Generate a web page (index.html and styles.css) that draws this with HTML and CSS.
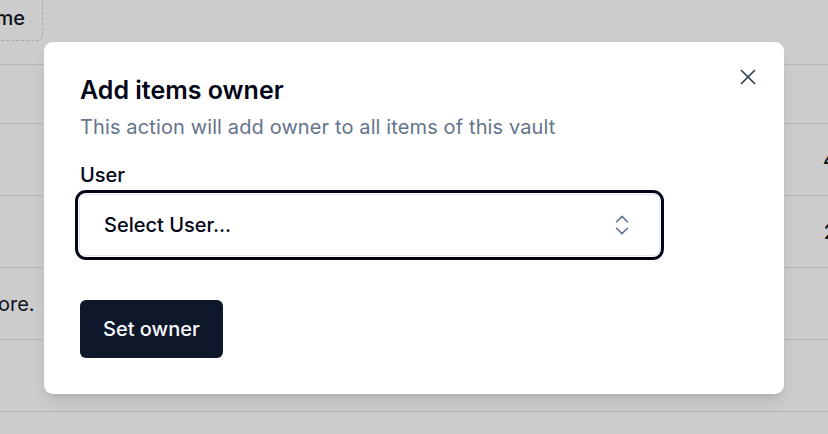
FILE: index.html
```html
<!DOCTYPE html>
<html>
<head>
<meta charset="utf-8">
<link rel="stylesheet" href="styles.css">
</head>
<body>
<div class="page">
  <div class="head-row">
    <div class="head-cell">me</div>
  </div>
  <div class="table">
    <div class="row row-first"><span class="lt"></span><span class="rt"></span></div>
    <div class="row"><span class="lt"></span><span class="rt">4</span></div>
    <div class="row"><span class="lt"></span><span class="rt">2</span></div>
    <div class="row"><span class="lt">ore.</span><span class="rt">1</span></div>
    <div class="row"><span class="lt"></span><span class="rt">1</span></div>
  </div>
</div>
<div class="overlay"></div>
<div class="dialog">
  <button class="close" aria-label="Close">
    <svg width="26" height="26" viewBox="0 0 24 24" fill="none" stroke="currentColor" stroke-width="1.6" stroke-linecap="round" stroke-linejoin="round"><path d="M18 6 6 18"/><path d="m6 6 12 12"/></svg>
  </button>
  <h2 class="title">Add items owner</h2>
  <p class="desc">This action will add owner to all items of this vault</p>
  <label class="label">User</label>
  <div class="select-ring">
    <div class="select">
      <span>Select User...</span>
      <svg class="chev" width="26" height="26" viewBox="0 0 24 24" fill="none" stroke="currentColor" stroke-width="1.5" stroke-linecap="round" stroke-linejoin="round"><path d="m7 15 5 5 5-5"/><path d="m7 9 5-5 5 5"/></svg>
    </div>
  </div>
  <button class="submit">Set owner</button>
</div>
</body>
</html>
```
FILE: styles.css
```css
* { box-sizing: border-box; }
html, body { margin: 0; padding: 0; }
body {
  width: 828px;
  height: 434px;
  overflow: hidden;
  background: #fff;
  font-family: Inter, "Noto Sans", sans-serif;
  color: #0f172a;
  position: relative;
}
.page { width: 828px; }
.head-row { height: 65px; border-bottom: 1px solid #e2e8f0; }
.head-cell {
  width: 43px;
  height: 41px;
  border: 1px dashed #cbd5e1;
  border-top: none;
  border-left: none;
  border-bottom-right-radius: 6px;
  font-size: 20px;
  font-weight: 500;
  line-height: 36px;
  text-align: right;
  padding-right: 17px;
  overflow: hidden;
  white-space: nowrap;
  direction: rtl;
}
.row {
  height: 72px;
  border-bottom: 1px solid #e2e8f0;
  display: flex;
  align-items: center;
  justify-content: space-between;
  font-size: 20px;
}
.row-first { height: 59px; }
.lt { margin-left: -2px; }
.rt { margin-right: -8px; font-weight: 500; }
.overlay {
  position: absolute;
  inset: 0;
  background: rgba(0, 0, 0, 0.2);
}
.dialog {
  position: absolute;
  left: 44px;
  top: 42px;
  width: 740px;
  height: 352px;
  background: #fff;
  border-radius: 9px;
  box-shadow: 0 10px 15px -3px rgba(0,0,0,0.1), 0 4px 6px -4px rgba(0,0,0,0.1);
  padding: 34px 36px;
  display: flex;
  flex-direction: column;
  align-items: flex-start;
}
.close {
  position: absolute;
  top: 22px;
  right: 23px;
  background: none;
  border: none;
  padding: 0;
  color: #334155;
  display: flex;
}
.title {
  margin: 0;
  font-size: 25px;
  font-weight: 600;
  line-height: 28px;
  color: #020617;
}
.desc {
  margin: 9px 0 0;
  font-size: 20px;
  line-height: 28px;
  letter-spacing: 0.12px;
  color: #64748b;
}
.label {
  margin-top: 20px;
  font-size: 20px;
  font-weight: 500;
  line-height: 28px;
  color: #020617;
}
.select-ring {
  margin-top: 1px;
  margin-left: -5px;
  width: 589px;
  border: 3px solid #020617;
  border-radius: 11px;
  padding: 1px;
}
.select {
  height: 62px;
  border: 1px solid #e2e8f0;
  border-radius: 7px;
  display: flex;
  align-items: center;
  justify-content: space-between;
  padding: 0 24px 0 24px;
  font-size: 20px;
  font-weight: 500;
  color: #020617;
}
.chev { color: #64748b; }
.submit {
  margin-top: 40px;
  height: 58px;
  padding: 0 23px;
  border: none;
  border-radius: 6px;
  background: #0f172a;
  color: #f8fafc;
  font-family: inherit;
  font-size: 20px;
  font-weight: 500;
}
```
